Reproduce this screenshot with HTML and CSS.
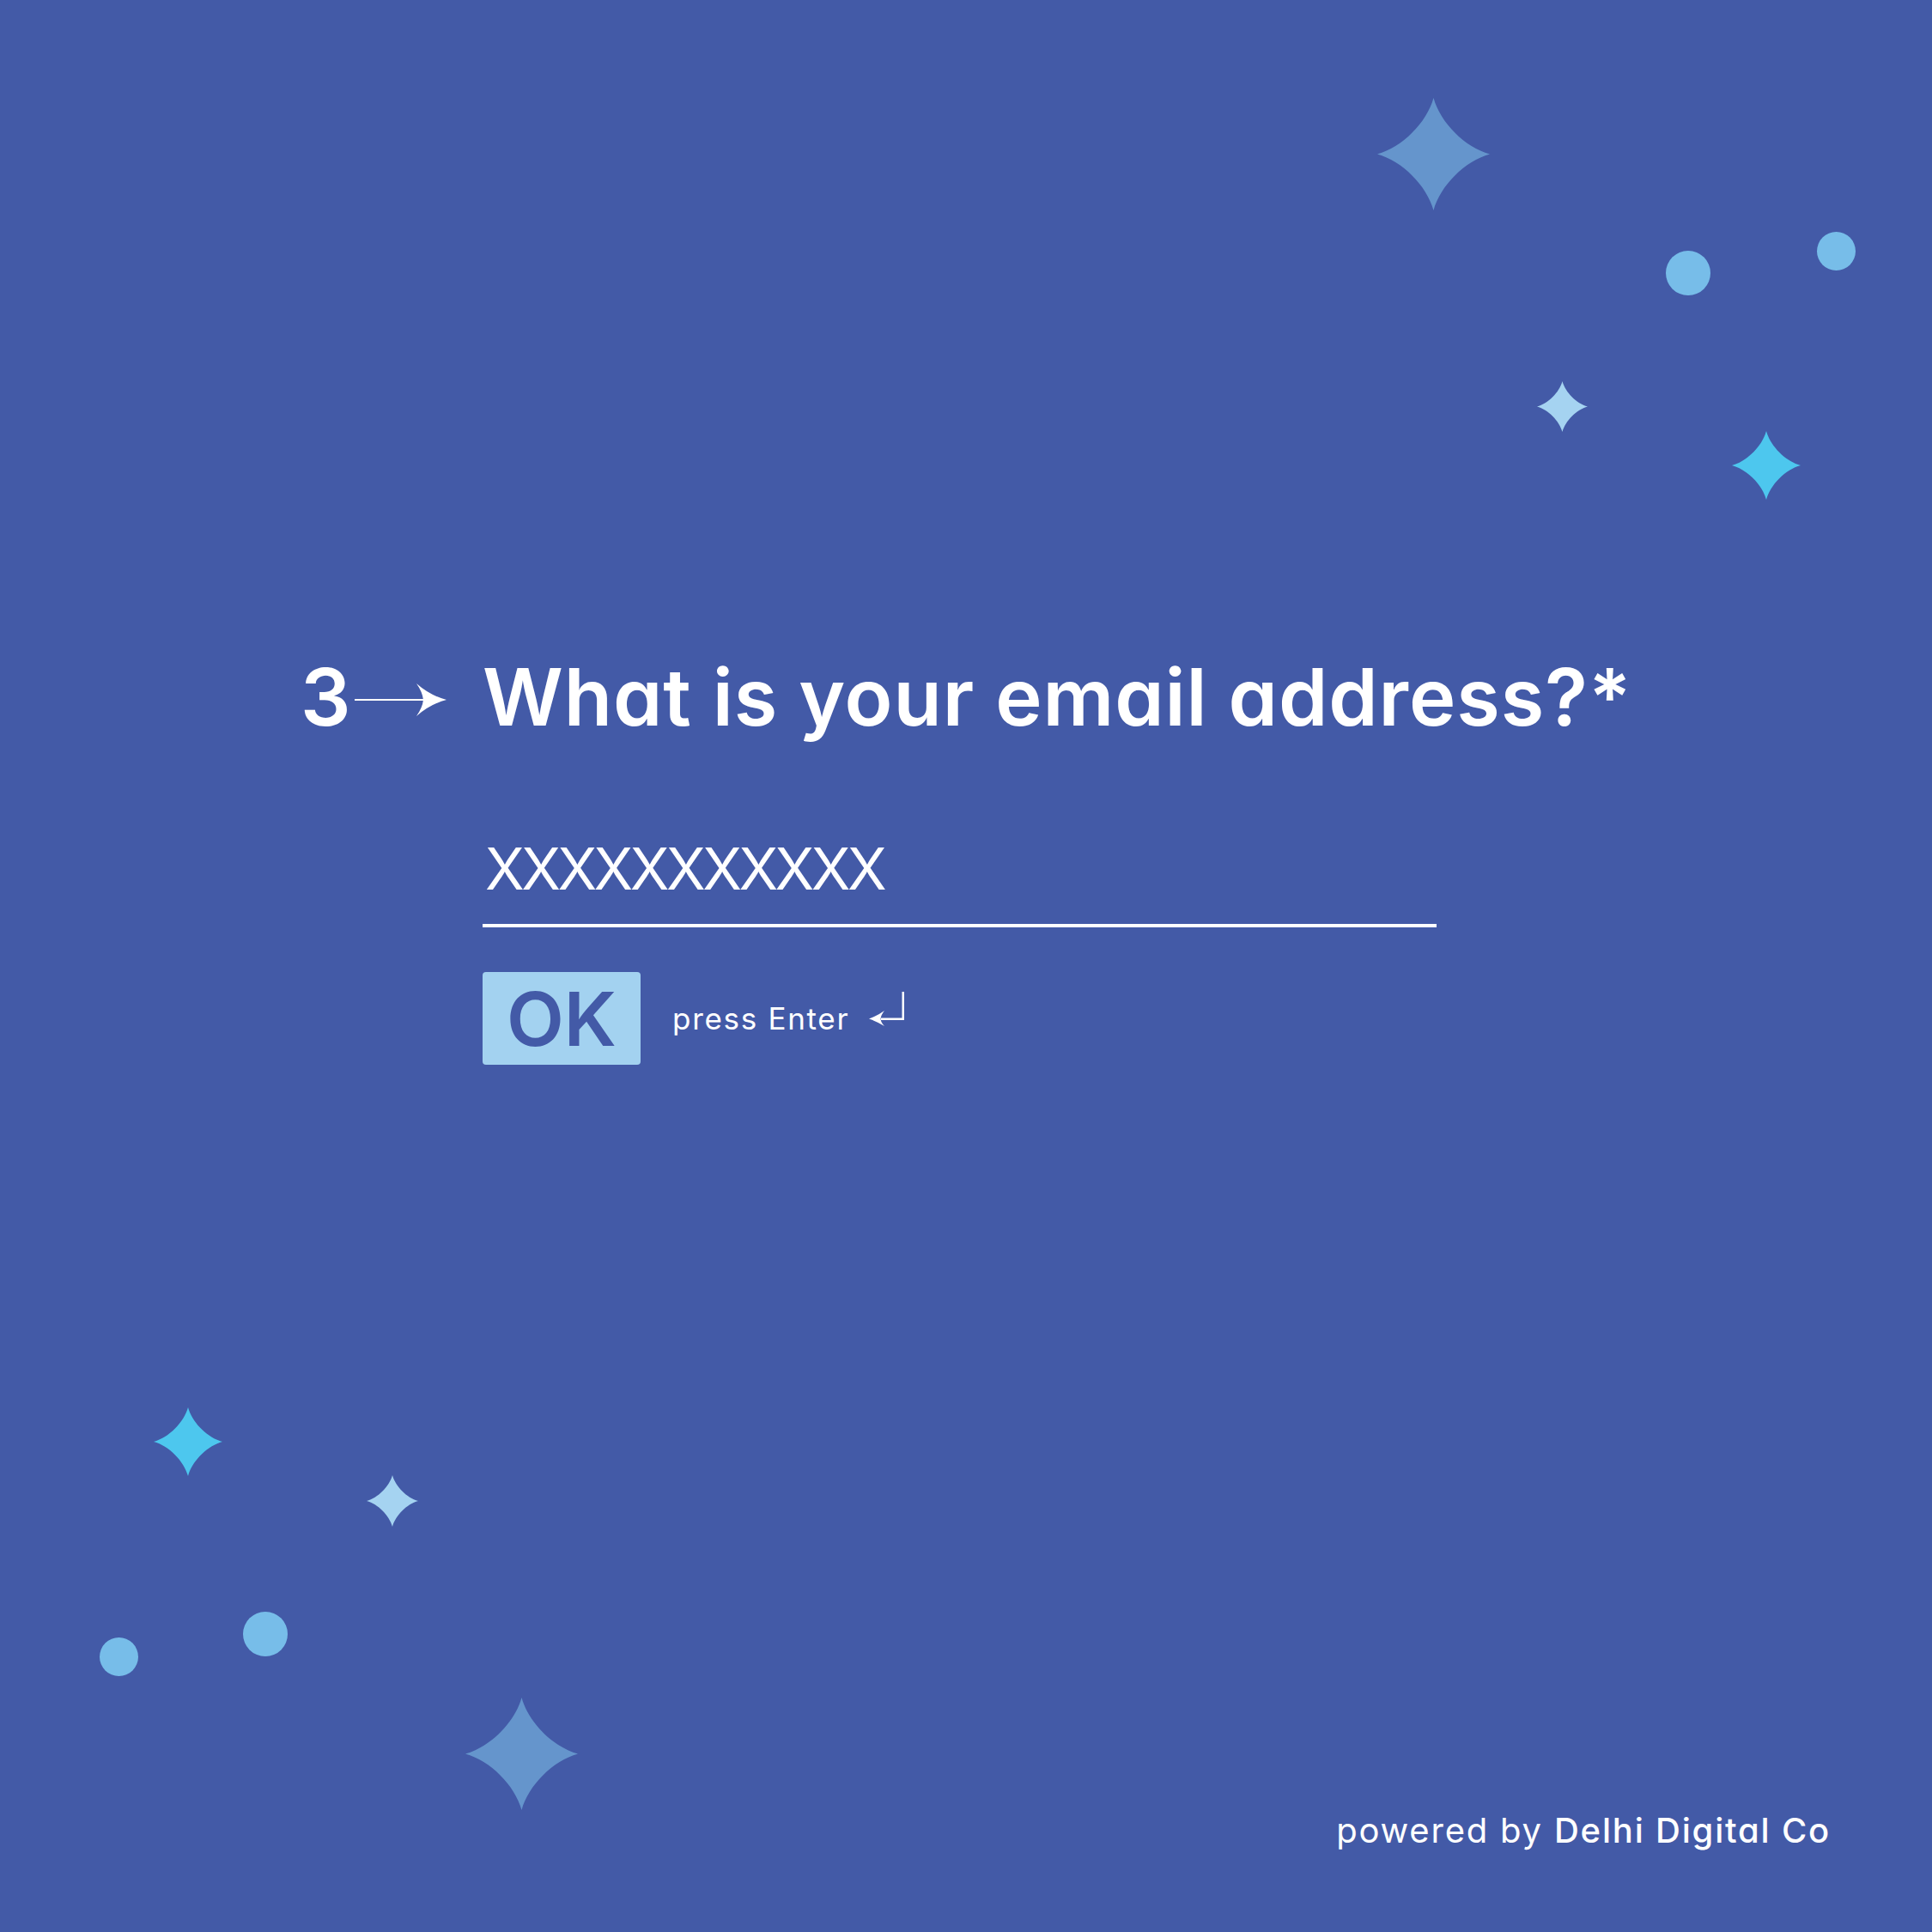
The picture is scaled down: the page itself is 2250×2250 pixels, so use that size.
FILE: index.html
```html
<!DOCTYPE html>
<html lang="en">
<head>
<meta charset="utf-8">
<title>Email question</title>
<link rel="stylesheet" href="styles.css">
</head>
<body>
<div class="canvas">
  <svg class="defs" width="0" height="0" aria-hidden="true">
    <defs>
      <symbol id="sparkle" viewBox="0 0 100 100">
        <path d="M50 0C44 22 22 44 0 50C22 56 44 78 50 100C56 78 78 56 100 50C78 44 56 22 50 0Z"/>
      </symbol>
    </defs>
  </svg>

  <svg class="deco star star-big star-tr-big"><use href="#sparkle"/></svg>
  <span class="deco dot dot-lg dot-tr-1"></span>
  <span class="deco dot dot-sm dot-tr-2"></span>
  <svg class="deco star star-light star-tr-small"><use href="#sparkle"/></svg>
  <svg class="deco star star-cyan star-tr-cyan"><use href="#sparkle"/></svg>

  <svg class="deco star star-cyan star-bl-cyan"><use href="#sparkle"/></svg>
  <svg class="deco star star-light star-bl-small"><use href="#sparkle"/></svg>
  <span class="deco dot dot-sm dot-bl-1"></span>
  <span class="deco dot dot-lg dot-bl-2"></span>
  <svg class="deco star star-big star-bl-big"><use href="#sparkle"/></svg>

  <main class="form">
    <div class="q-row">
      <div class="q-index">
        <span class="q-num">3</span>
        <svg class="q-arrow" viewBox="0 0 107 40" aria-hidden="true">
          <line x1="0" y1="20" x2="82" y2="20" stroke="#fff" stroke-width="2.2"/>
          <path d="M107 20Q88 15 72 1Q79 11 80 20Q79 29 72 39Q88 25 107 20Z" fill="#fff"/>
        </svg>
      </div>
      <h1 class="q-title">What is your email address?*</h1>
    </div>
    <div class="answer">
      <div class="answer-field">XXXXXXXXXXX</div>
      <div class="actions">
        <button class="ok-btn" type="button">OK</button>
        <span class="hint">press Enter</span>
        <svg class="enter-icon" viewBox="0 0 41 40" aria-hidden="true">
          <path d="M39.8 0V31.8H14" fill="none" stroke="#fff" stroke-width="2.6"/>
          <path d="M0 31.5Q10 28 18 22Q14 27 13.5 31.5Q14 36 18 40Q10 35 0 31.5Z" fill="#fff"/>
        </svg>
      </div>
    </div>
  </main>

  <footer class="credit">powered by <strong>Delhi Digital Co</strong></footer>
</div>
</body>
</html>
```

FILE: styles.css
```css
* { box-sizing: border-box; }

html, body {
  margin: 0;
  padding: 0;
}

body {
  background: #435aa7;
  font-family: "Inter", "Liberation Sans", sans-serif;
  font-feature-settings: "cv11" 1;
  color: #ffffff;
}

.canvas {
  position: relative;
  width: 2250px;
  height: 2250px;
  overflow: hidden;
  background: #435aa7;
  display: flex;
  flex-direction: column;
  padding: 766px 118px 98px 350px;
}

.defs { position: absolute; width: 0; height: 0; }

/* decorative sparkles & dots */
.deco { position: absolute; display: block; }
.star-big { fill: #6595cc; width: 131px; height: 131px; }
.star-light { fill: #a5d3f1; }
.star-cyan { fill: #4dc7ee; width: 80px; height: 80px; }
.dot { border-radius: 50%; background: #77bde9; }
.dot-lg { width: 52px; height: 52px; }
.dot-sm { width: 45px; height: 45px; }

.star-tr-big { left: 1604px; top: 114px; }
.dot-tr-1 { left: 1940px; top: 292px; }
.dot-tr-2 { left: 2116px; top: 270px; }
.star-tr-small { left: 1790px; top: 444px; width: 59px; height: 59px; }
.star-tr-cyan { left: 2017px; top: 502px; }

.star-bl-cyan { left: 179px; top: 1639px; }
.star-bl-small { left: 427px; top: 1718px; width: 60px; height: 60px; }
.dot-bl-1 { left: 116px; top: 1907px; }
.dot-bl-2 { left: 283px; top: 1877px; }
.star-bl-big { left: 542px; top: 1977px; }

/* form */
.form {
  display: flex;
  flex-direction: column;
  position: relative;
}

.q-row {
  display: grid;
  grid-template-columns: 212px auto;
  align-items: center;
}

.q-index {
  display: flex;
  align-items: center;
}

.q-num,
.q-title {
  font-size: 92px;
  line-height: 1;
  font-weight: 600;
  margin: 0;
}

.q-title {
  letter-spacing: 0.9px;
}

.q-arrow {
  width: 107px;
  height: 40px;
  margin-left: 4px;
  margin-top: 5px;
}

.answer {
  margin-left: 212px;
  margin-top: 120px;
  display: flex;
  flex-direction: column;
}

.answer-field {
  width: 1111px;
  font-size: 67px;
  line-height: 1;
  font-weight: 400;
  letter-spacing: -3.5px;
  padding-left: 3px;
  padding-bottom: 31px;
  border-bottom: 4px solid #ffffff;
}

.actions {
  display: flex;
  align-items: center;
  margin-top: 52px;
}

.ok-btn {
  width: 184px;
  height: 108px;
  border: 0;
  border-radius: 4px;
  background: #a3d2f0;
  color: #435aa7;
  font-family: inherit;
  font-feature-settings: inherit;
  font-size: 87px;
  font-weight: 600;
  line-height: 1;
  padding: 0;
  display: flex;
  align-items: center;
  justify-content: center;
}

.hint {
  font-size: 35px;
  line-height: 1;
  font-weight: 400;
  letter-spacing: 1.7px;
  margin-left: 37px;
}

.enter-icon {
  width: 41px;
  height: 40px;
  margin-left: 23px;
  align-self: flex-start;
  margin-top: 23px;
}

.credit {
  margin-top: auto;
  align-self: flex-end;
  font-size: 40px;
  line-height: 1;
  font-weight: 400;
  letter-spacing: 1.8px;
}

.credit strong {
  font-weight: 500;
}
```
